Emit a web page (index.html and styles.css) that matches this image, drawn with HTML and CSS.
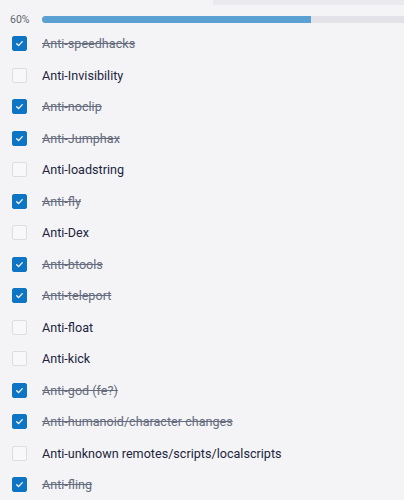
FILE: index.html
```html
<!DOCTYPE html>
<html>
<head>
	<meta charset="utf-8">
	<title>Checklist</title>
	<link rel="stylesheet" href="styles.css">
</head>
<body>
	<div class="topbar"></div>
	<div class="progress">
		<span class="pct">60%</span>
		<div class="track"><div class="fill" style="width: 269px"></div></div>
	</div>
	<ul class="list">
		<li class="done"><span class="box"></span><span class="label">Anti-speedhacks</span></li>
		<li><span class="box"></span><span class="label">Anti-Invisibility</span></li>
		<li class="done"><span class="box"></span><span class="label">Anti-noclip</span></li>
		<li class="done"><span class="box"></span><span class="label">Anti-Jumphax</span></li>
		<li><span class="box"></span><span class="label">Anti-loadstring</span></li>
		<li class="done"><span class="box"></span><span class="label">Anti-fly</span></li>
		<li><span class="box"></span><span class="label">Anti-Dex</span></li>
		<li class="done"><span class="box"></span><span class="label">Anti-btools</span></li>
		<li class="done"><span class="box"></span><span class="label">Anti-teleport</span></li>
		<li><span class="box"></span><span class="label">Anti-float</span></li>
		<li><span class="box"></span><span class="label">Anti-kick</span></li>
		<li class="done"><span class="box"></span><span class="label">Anti-god (fe?)</span></li>
		<li class="done"><span class="box"></span><span class="label">Anti-humanoid/character changes</span></li>
		<li><span class="box"></span><span class="label">Anti-unknown remotes/scripts/localscripts</span></li>
		<li class="done"><span class="box"></span><span class="label">Anti-fling</span></li>
	</ul>
</body>
</html>
```

FILE: styles.css
```css
html, body{margin: 0; overflow: hidden;}
body{background: #f4f4f6;
	font-family: "Roboto", "Noto Sans", sans-serif;
	color: #1c2440;}

.topbar{margin-left: 213px; height: 5px; background: #e9e9ee;}

.progress{display: flex; align-items: center; height: 7px; padding: 11px 0 5px; overflow: hidden;}
.pct{flex: none; width: 32px; padding-left: 10px; font-size: 10.5px; color: #5d6472;}
.track{flex: none; width: 448px; height: 7px; background: #e2e2e8; border-radius: 4px 0 0 4px;}
.fill{height: 7px; background: #5aa0d2; border-radius: 4px 0 0 4px;}

.list{list-style: none; margin: 0; padding: 0;}
.list li{display: flex; align-items: center; height: 31.5px; padding-left: 12px;}
.box{flex: none; width: 13px; height: 13px; margin-right: 15px;
	border: 1px solid #dcdde2; border-radius: 2px; background: #f8f8fa;}
.label{font-size: 12.6px;}

.done .box{border-color: #0e74c4; background: #0e74c4 url("data:image/svg+xml,%3Csvg xmlns='http://www.w3.org/2000/svg' viewBox='0 0 14 14'%3E%3Cpath d='M4 7.3l2 2 4-4.3' fill='none' stroke='white' stroke-width='1.4' stroke-linecap='round' stroke-linejoin='round'/%3E%3C/svg%3E") center/13px no-repeat;}
.done .label{color: #646b7c; text-decoration: line-through;}
```
